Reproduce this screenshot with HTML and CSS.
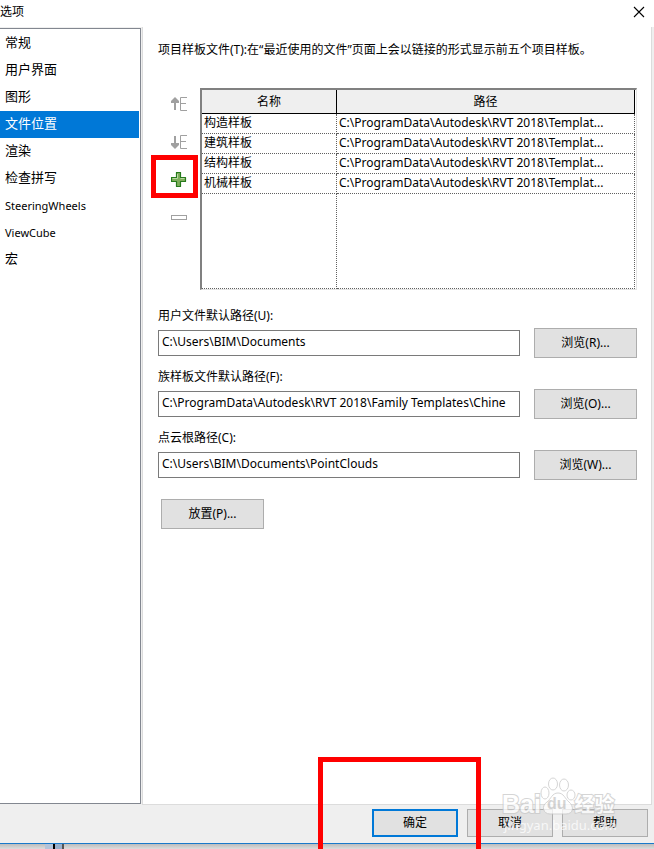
FILE: index.html
```html
<!DOCTYPE html>
<html lang="zh-CN">
<head>
    <meta charset="UTF-8">
    <meta name="viewport" content="width=device-width, initial-scale=1.0">
    <title>选项</title>
    <link rel="stylesheet" href="styles.css">
</head>
<body>
    <div class="dialog">
        <!-- Title bar -->
        <header class="titlebar">
            <h1>选项</h1>
            <button class="close" aria-label="关闭">
                <svg width="12" height="12" viewBox="0 0 12 12"><path d="M1 1L11 11M11 1L1 11" stroke="#000" stroke-width="1.1"/></svg>
            </button>
        </header>

        <div class="content">
            <!-- Categories -->
            <nav class="sidebar">
                <a href="#">常规</a>
                <a href="#">用户界面</a>
                <a href="#">图形</a>
                <a href="#" class="active">文件位置</a>
                <a href="#">渲染</a>
                <a href="#">检查拼写</a>
                <a href="#" class="latin">SteeringWheels</a>
                <a href="#" class="latin">ViewCube</a>
                <a href="#">宏</a>
            </nav>

            <main class="panel">
                <p class="intro">项目样板文件(T):在“最近使用的文件”页面上会以链接的形式显示前五个项目样板。</p>

                <div class="templates">
                    <div class="tools">
                        <button class="tool" aria-label="上移">
                            <svg width="16" height="14" viewBox="0 0 16 14"><path d="M4 0L8 4V6H5V13H3V6H0V4Z" fill="#a0a0a0"/><path d="M16 .5H9.500V13.500H16M9.500 6.500H15" fill="none" stroke="#a0a0a0"/></svg>
                        </button>
                        <button class="tool" aria-label="下移">
                            <svg width="16" height="14" viewBox="0 0 16 14"><path d="M4 14L8 10V8H5V1H3V8H0V10Z" fill="#a0a0a0"/><path d="M16 .5H9.500V13.500H16M9.500 6.500H15" fill="none" stroke="#a0a0a0"/></svg>
                        </button>
                        <button class="tool marked" aria-label="添加">
                            <svg width="16" height="16" viewBox="0 0 16 16">
                                <path d="M5.500 .5H9.500V5.500H14.500V9.500H9.500V14.500H5.500V9.500H.5V5.500H5.500Z" fill="#7fae5c" stroke="#267a1b" stroke-width="1.2" stroke-linejoin="round"/>
                                <path d="M6.500 2V6.500H1.500M9.500 6.500H13.500" fill="none" stroke="#b9d6a3"/>
                            </svg>
                        </button>
                        <button class="tool" aria-label="删除">
                            <svg width="16" height="6" viewBox="0 0 16 6"><rect x=".5" y=".5" width="15" height="4" fill="#fff" stroke="#a0a0a0"/></svg>
                        </button>
                    </div>

                    <div class="table-box">
                        <table>
                            <thead>
                                <tr><th class="name">名称</th><th>路径</th></tr>
                            </thead>
                            <tbody>
                                <tr><td>构造样板</td><td>C:\ProgramData\Autodesk\RVT 2018\Templat...</td></tr>
                                <tr><td>建筑样板</td><td>C:\ProgramData\Autodesk\RVT 2018\Templat...</td></tr>
                                <tr><td>结构样板</td><td>C:\ProgramData\Autodesk\RVT 2018\Templat...</td></tr>
                                <tr><td>机械样板</td><td>C:\ProgramData\Autodesk\RVT 2018\Templat...</td></tr>
                                <tr class="empty"><td></td><td></td></tr>
                            </tbody>
                        </table>
                    </div>
                </div>

                <!-- Default paths -->
                <div class="fields">
                    <div class="field">
                        <label for="userPath">用户文件默认路径(U):</label>
                        <div class="field-row">
                            <input type="text" id="userPath" value="C:\Users\BIM\Documents">
                            <button class="btn">浏览(R)...</button>
                        </div>
                    </div>
                    <div class="field">
                        <label for="familyPath">族样板文件默认路径(F):</label>
                        <div class="field-row">
                            <input type="text" id="familyPath" value="C:\ProgramData\Autodesk\RVT 2018\Family Templates\Chine">
                            <button class="btn">浏览(O)...</button>
                        </div>
                    </div>
                    <div class="field">
                        <label for="cloudPath">点云根路径(C):</label>
                        <div class="field-row">
                            <input type="text" id="cloudPath" value="C:\Users\BIM\Documents\PointClouds">
                            <button class="btn">浏览(W)...</button>
                        </div>
                    </div>
                </div>
                <button class="btn places">放置(P)...</button>
            </main>
        </div>

        <footer class="footer">
            <button class="btn primary">确定</button>
            <button class="btn">取消</button>
            <button class="btn">帮助</button>
            <div class="highlight"></div>

            <!-- Watermark -->
            <div class="watermark">
                <svg width="36" height="38" viewBox="0 0 36 38" fill="#fff" stroke="#c8c8c8">
                    <ellipse cx="13" cy="7" rx="4.500" ry="6"/>
                    <ellipse cx="24" cy="8" rx="4.500" ry="6"/>
                    <ellipse cx="5" cy="16" rx="4" ry="6"/>
                    <ellipse cx="31" cy="18" rx="4" ry="5"/>
                    <path d="M18 16C12 16 11 22 7 25C1 29 3 37 10 37H26C34 37 34 29 29 25C25 22 24 16 18 16Z"/>
                </svg>
                <div class="mark"><span>Bai</span><span class="du">du</span><span class="cjk">经验</span></div>
                <div class="site">jingyan.baidu.com</div>
            </div>
        </footer>
    </div>
    <div class="desktop"></div>
</body>
</html>
```
FILE: styles.css
```css
*,
*::after {
    box-sizing: border-box;
}

body {
    margin: 0;
    min-height: 100vh;
    display: flex;
    flex-direction: column;
    overflow: hidden;
    font-family: "Noto Sans", "Noto Sans CJK SC", sans-serif;
    font-size: 12px;
    line-height: 20px;
    color: #000;
    background: #fff;
}

button,
input {
    font: inherit;
    color: inherit;
}

.dialog {
    flex: 1;
    display: flex;
    flex-direction: column;
    border-bottom: 1px solid #1979ca;
    background: #efefef;
}

/* Title bar */
.titlebar {
    display: flex;
    justify-content: space-between;
    align-items: center;
    height: 27px;
    padding: 0 9px 4px 0;
    background: #fff;
}

.titlebar h1 {
    margin: 0;
    font-size: 12px;
    font-weight: normal;
}

.close,
.tool {
    display: flex;
    align-items: center;
    justify-content: center;
    padding: 0;
    border: none;
    background: none;
}

/* Main area */
.content {
    flex: 1;
    display: flex;
    gap: 1px;
}

.sidebar {
    width: 141px;
    margin: 1px 0;
    padding: 1px 1px 0 0;
    border: 1px solid #828790;
    border-left: none;
    background: #fff;
}

.sidebar a {
    display: block;
    height: 27px;
    padding-left: 5px;
    font-size: 13px;
    line-height: 25px;
    color: #000;
    text-decoration: none;
}

.sidebar .latin {
    font-size: 11px;
    line-height: 27px;
}

.sidebar .active {
    background: #0078d7;
    color: #fff;
}

.panel {
    flex: 1;
    min-width: 0;
    margin-right: 2px;
    padding: 13px 14px 0 15px;
    border: 1px solid #dcdcdc;
    border-top: none;
    background: #fff;
}

.intro {
    margin: 0 0 25px;
    white-space: nowrap;
}

.templates {
    display: flex;
}

.tools {
    width: 42px;
}

.tool {
    position: relative;
    width: 100%;
    height: 38px;
}

.marked::after {
    content: '';
    position: absolute;
    top: -6px;
    left: -7px;
    width: 47px;
    height: 43px;
    border: 5px solid #f00;
}

.table-box {
    flex: 1;
    min-width: 0;
    margin-top: 3px;
    padding-right: 1px;
    border: 2px solid #808080;
    border-right: 1px solid #e3e3e3;
    border-bottom: 1px solid #e3e3e3;
}

table {
    width: 100%;
    table-layout: fixed;
    border-collapse: separate;
    border-spacing: 0;
}

th {
    height: 24px;
    padding: 0;
    border-right: 1px solid #000;
    border-bottom: 1px solid #000;
    font-weight: normal;
    background: #efefef;
}

.name {
    width: 135px;
}

td {
    height: 20px;
    padding: 0 0 2px 2px;
    border-right: 1px dotted #606060;
    border-bottom: 1px dotted #606060;
    line-height: 17px;
    white-space: nowrap;
}

.empty td {
    height: 95px;
}

/* Path fields */
.fields {
    display: flex;
    flex-direction: column;
    gap: 9px;
    margin-top: 16px;
}

.field {
    display: flex;
    flex-direction: column;
    gap: 2px;
}

.field-row {
    display: flex;
    align-items: center;
    gap: 14px;
}

input {
    flex: 1;
    min-width: 0;
    height: 26px;
    padding: 0 1px 4px 3px;
    border: 1px solid #7a7a7a;
    background: #fff;
}

.btn {
    width: 103px;
    height: 30px;
    padding: 0;
    border: 1px solid #adadad;
    background: #e1e1e1;
}

.places {
    margin: 19px 0 0 3px;
}

/* Bottom buttons */
.footer {
    position: relative;
    display: flex;
    justify-content: flex-end;
    gap: 9px;
    padding: 4px 6px 6px;
}

.footer .btn {
    width: 86px;
    height: 28px;
}

.footer .primary {
    border: 2px solid #0078d7;
}

.highlight {
    position: absolute;
    right: 173px;
    top: -48px;
    width: 163px;
    height: 100px;
    border: 5px solid #f00;
    border-bottom: none;
}

.watermark {
    position: absolute;
    right: 30px;
    top: -28px;
    width: 122px;
    height: 58px;
    opacity: 0.75;
    pointer-events: none;
}

.watermark svg {
    position: absolute;
    left: 38px;
    top: 0;
}

.mark {
    position: absolute;
    top: 13px;
    left: 0;
    display: flex;
    align-items: center;
    font: bold 25px/28px "Liberation Sans", sans-serif;
    color: #fff;
    -webkit-text-stroke: 2px #c8c8c8;
    paint-order: stroke fill;
    white-space: nowrap;
}

.du {
    margin: 0 8px 0 6px;
    font-size: 16px;
    color: #c8c8c8;
    -webkit-text-stroke: 0;
}

.mark .cjk {
    font: bold 20px/28px "Noto Sans CJK SC", sans-serif;
}

.site {
    position: absolute;
    top: 38px;
    left: 2px;
    font-size: 13px;
    color: #fff;
}

/* Strip of the window behind */
.desktop {
    height: 5px;
    background: linear-gradient(90deg, transparent 45px, #b3c3d9 45px 53px, #000 53px 55px, #9ab0cc 55px 62px, #555 62px 64px, transparent 64px), linear-gradient(#bdbdbd, #dcdcdc);
}
```
